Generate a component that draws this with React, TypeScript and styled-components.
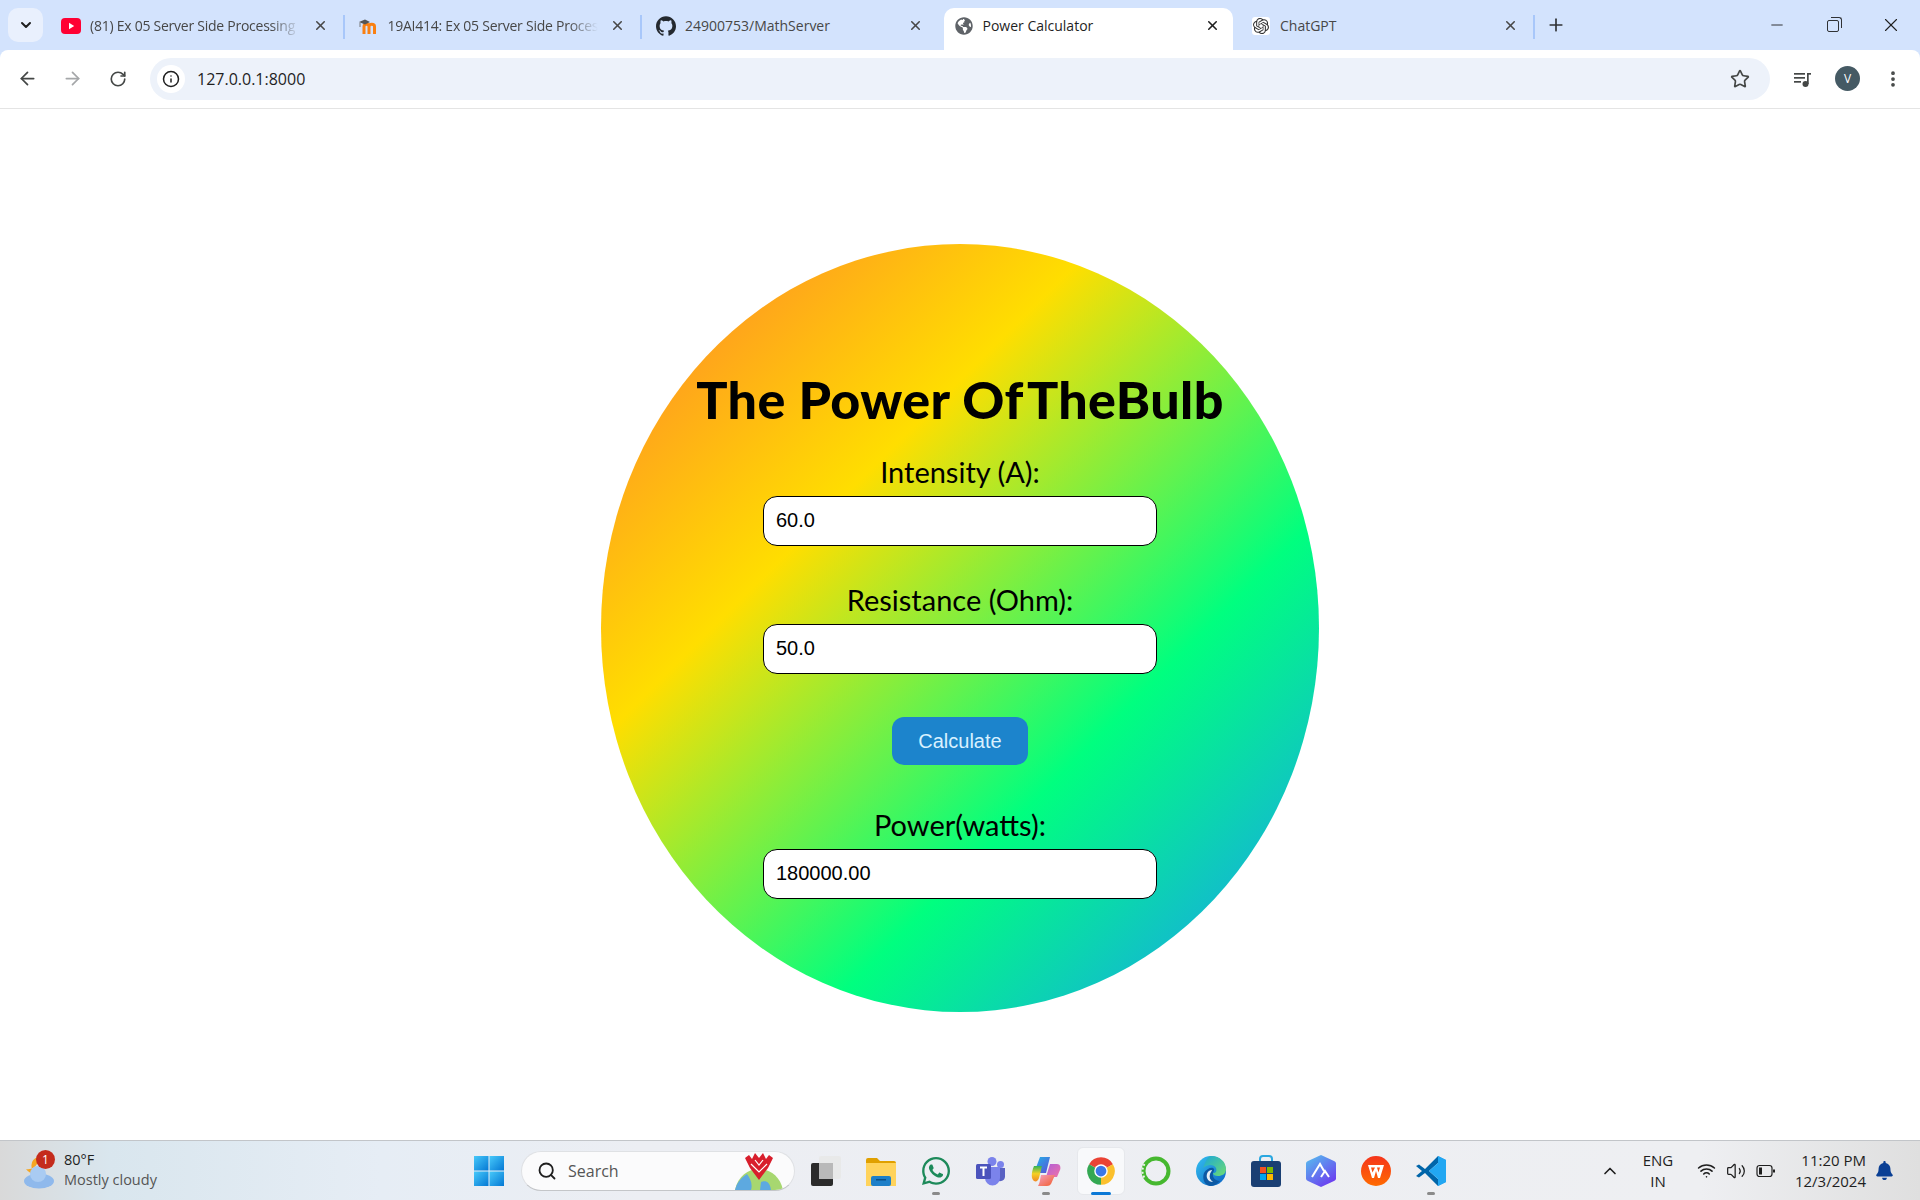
import React from 'react';
import styled, { createGlobalStyle } from 'styled-components';
import { ArrowLeft, ArrowRight, ChevronDown, ChevronUp, Info, Minus, MoreVertical, Plus, RotateCw, Search, Star, Volume2, Wifi, X } from 'lucide-react';
import { FaGlobeAmericas, FaWhatsapp, FaBell } from 'react-icons/fa';
import { SiGithub, SiOpenai } from 'react-icons/si';

const GlobalStyle = createGlobalStyle`
  html, body { margin: 0; padding: 0; background: #fff; }
  #root { height: 100vh; }
  * { box-sizing: border-box; }
`;

const Screen = styled.div`
  height: 1200px;
  width: 1920px;
  display: flex;
  flex-direction: column;
  overflow: hidden;
  font-family: 'Open Sans', 'Liberation Sans', sans-serif;
`;

/* browser chrome */
const TabStrip = styled.div`
  height: 50px;
  background: #d3e3fd;
  display: flex;
  align-items: flex-start;
  flex: none;
`;

const ExpandButton = styled.div`
  width: 35px;
  height: 34px;
  margin: 8px 3px 0 8px;
  border-radius: 10px;
  background: #e9f0fd;
  display: flex;
  align-items: center;
  justify-content: center;
  color: #1f1f1f;
`;

const Tab = styled.div<{ $active?: boolean; $sep?: boolean }>`
  position: relative;
  width: 297.5px;
  height: 42px;
  margin-top: 8px;
  padding: 0 15px 7px 15px;
  display: flex;
  align-items: center;
  color: ${(p) => (p.$active ? '#1f1f1f' : '#474747')};

  ${(p) =>
    p.$active &&
    `
    &::before {
      content: '';
      position: absolute;
      left: 5px;
      right: 3px;
      top: 0;
      bottom: 0;
      background: #fff;
      border-radius: 10px 10px 0 0;
    }
  `}

  ${(p) =>
    p.$sep &&
    `
    &::after {
      content: '';
      position: absolute;
      right: -1px;
      top: 7px;
      width: 2px;
      height: 24px;
      background: #a8c7fa;
    }
  `}
`;

const Favicon = styled.span`
  position: relative;
  width: 20px;
  height: 20px;
  flex: none;
  display: flex;
  align-items: center;
  justify-content: center;
`;

const TabTitle = styled.span<{ $fade?: boolean }>`
  position: relative;
  margin-left: 9px;
  width: 210px;
  flex: none;
  font-size: 14px;
  white-space: nowrap;
  overflow: hidden;
  ${(p) => p.$fade && `letter-spacing: -0.25px; mask-image: linear-gradient(90deg, #000 86%, transparent 100%);`}
`;

const TabClose = styled.span`
  position: relative;
  margin-left: auto;
  margin-right: 1px;
  display: flex;
  align-items: center;
`;

const NewTab = styled.div`
  width: 28px;
  height: 34px;
  margin: 8px 0 0 8.5px;
  display: flex;
  align-items: center;
  justify-content: center;
  color: #303235;
`;

const WindowControls = styled.div`
  margin-left: auto;
  display: flex;
  height: 50px;
  color: #1f1f1f;
`;

const WindowButton = styled.div<{ $w: number }>`
  width: ${(p) => p.$w}px;
  display: flex;
  align-items: center;
  justify-content: center;
`;

const RestoreIcon = styled.span`
  position: relative;
  width: 12px;
  height: 12px;
  border: 1px solid #303235;
  border-radius: 2px;
  background: #d3e3fd;
  margin-top: 2px;

  &::before {
    content: '';
    position: absolute;
    top: -4px;
    right: -4px;
    width: 10px;
    height: 10px;
    border-top: 1px solid #303235;
    border-right: 1px solid #303235;
    border-radius: 0 3px 0 0;
  }
`;

const ToolbarWrap = styled.div`
  background: #d3e3fd;
  flex: none;
`;

const Toolbar = styled.div`
  height: 59px;
  background: #fff;
  border-radius: 8px 8px 0 0;
  border-bottom: 1px solid #e4e4e4;
  padding: 0 4px 1px 5px;
  display: flex;
  align-items: center;
`;

const ToolSlot = styled.div<{ $muted?: boolean }>`
  width: 45px;
  height: 40px;
  flex: none;
  display: flex;
  align-items: center;
  justify-content: center;
  color: ${(p) => (p.$muted ? '#a5a7a9' : '#444746')};
`;

const Omnibox = styled.div`
  width: 1620px;
  height: 42px;
  margin: 0 10px 0 10px;
  padding: 0 20px 0 7px;
  border-radius: 21px;
  background: #edf2fa;
  display: flex;
  align-items: center;
  flex: none;
`;

const InfoChip = styled.span`
  width: 28px;
  height: 28px;
  border-radius: 50%;
  background: #fff;
  display: flex;
  align-items: center;
  justify-content: center;
  color: #1f1f1f;
`;

const Address = styled.span`
  margin-left: 12px;
  font-size: 16px;
  font-family: 'Open Sans', sans-serif;
  color: #1f1f1f;
`;

const StarSlot = styled.span`
  margin-left: auto;
  display: flex;
  color: #444746;
`;

const Avatar = styled.span`
  width: 25px;
  height: 25px;
  border-radius: 50%;
  background: #455a64;
  color: #fff;
  font-size: 12px;
  display: flex;
  align-items: center;
  justify-content: center;
`;

/* the page itself */
const Main = styled.main`
  flex: 1;
  display: flex;
  align-items: center;
  justify-content: center;
  padding-top: 6px;
  background: #fff;
`;

const Bulb = styled.form`
  width: 718px;
  height: 768px;
  border-radius: 50%;
  background: linear-gradient(135deg, #ff7a30, #ffde00, #00ff7f, #1e90ff);
  padding-top: 127px;
  display: flex;
  flex-direction: column;
  align-items: center;
  font-family: Lato, 'Liberation Sans', sans-serif;
  color: #000;
`;

const Title = styled.h1`
  margin: 0 0 25px;
  height: 56px;
  line-height: 56px;
  font-size: 52px;
  font-weight: 900;
  white-space: nowrap;
  letter-spacing: 0.4px;
`;

const Tight = styled.span`
  word-spacing: -7px;
`;

const Field = styled.div<{ $after: number }>`
  display: flex;
  flex-direction: column;
  align-items: center;
  margin-bottom: ${(p) => p.$after}px;
`;

const Label = styled.label`
  height: 40px;
  line-height: 40px;
  margin-bottom: 4px;
  font-size: 29px;
  white-space: nowrap;
`;

const Input = styled.input`
  width: 394px;
  height: 50px;
  padding: 0 12px;
  border: 1px solid #000;
  border-radius: 14px;
  background: #fff;
  color: #000;
  font-family: 'Liberation Sans', Arial, sans-serif;
  font-size: 20px;
  outline: none;
`;

const CalcButton = styled.button`
  width: 136px;
  height: 48px;
  margin-bottom: 40px;
  padding: 2px 0 0;
  border: 0;
  border-radius: 12px;
  background: #1c84cc;
  color: #d8f1ff;
  font-family: 'Liberation Sans', Arial, sans-serif;
  font-size: 20px;
`;

/* taskbar */
const Taskbar = styled.footer`
  height: 60px;
  flex: none;
  border-top: 1px solid #c2c5c9;
  background: linear-gradient(90deg, #d9d9d9 0, #d9e6ee 110px, #e6edf5 380px, #eceef3 640px, #eeeff2 1700px, #dfdfdf 100%);
  display: flex;
  align-items: center;
`;

const Weather = styled.div`
  width: 474px;
  padding-left: 25px;
  display: flex;
  align-items: center;
  flex: none;
`;

const WeatherIcon = styled.div`
  position: relative;
  width: 32px;
  height: 40px;
  margin-right: 10px;
  margin-left: -3px;
`;

const Badge = styled.span`
  position: absolute;
  top: -1px;
  left: 14px;
  width: 19px;
  height: 19px;
  border-radius: 50%;
  background: #c42b1c;
  color: #fff;
  font-size: 12px;
  display: flex;
  align-items: center;
  justify-content: center;
`;

const WeatherText = styled.div`
  font-size: 14.5px;
  line-height: 20px;
  color: #1f1f1f;
  margin-top: -2px;

  small {
    display: block;
    font-size: 14.5px;
    color: #555;
  }
`;

const StartButton = styled.div`
  width: 30px;
  height: 30px;
  flex: none;
`;

const SearchBox = styled.div`
  width: 274px;
  height: 40px;
  margin-left: 17px;
  padding-left: 15px;
  border-radius: 20px;
  background: #fbfbfc;
  border: 1px solid #dfe1e4;
  border-bottom-color: #c4c6c9;
  display: flex;
  align-items: center;
  color: #1f1f1f;
  flex: none;
  overflow: hidden;

  svg.ornament {
    margin-left: auto;
    margin-right: 10px;
  }
`;

const SearchText = styled.span`
  margin-left: 11px;
  font-size: 16px;
  color: #555;
`;

const Apps = styled.div`
  margin-left: 3.5px;
  display: flex;
`;

const AppSlot = styled.div<{ $active?: boolean }>`
  position: relative;
  width: 55px;
  height: 48px;
  display: flex;
  align-items: center;
  justify-content: center;

  ${(p) =>
    p.$active &&
    `
    &::before {
      content: '';
      position: absolute;
      left: 3.5px;
      right: 3.5px;
      top: 0;
      bottom: 0;
      border-radius: 6px;
      background: #f8f9fb;
      border: 1px solid #e6e8ec;
    }
  `}

  > svg {
    position: relative;
  }
`;

const RunDot = styled.span<{ $active?: boolean }>`
  position: absolute;
  bottom: 0;
  left: 50%;
  transform: translateX(-50%);
  width: ${(p) => (p.$active ? 20 : 8)}px;
  height: 3px;
  border-radius: 2px;
  background: ${(p) => (p.$active ? '#0b78d6' : '#8a8a8a')};
`;

const Tray = styled.div`
  margin-left: auto;
  padding-right: 18px;
  display: flex;
  align-items: center;
  color: #1f1f1f;
`;

const TraySlot = styled.div<{ $w: number }>`
  width: ${(p) => p.$w}px;
  display: flex;
  align-items: center;
  justify-content: center;
`;

const Lang = styled.div`
  width: 66px;
  text-align: center;
  font-size: 15px;
  line-height: 21px;
`;

const Clock = styled.div`
  width: 85px;
  text-align: right;
  font-size: 15px;
  line-height: 21px;
  white-space: nowrap;
`;

const YouTubeIcon = () => (
  <svg width="20" height="16" viewBox="0 0 20 16">
    <rect width="20" height="16" rx="4" fill="#ff0033" />
    <path d="M8 4.8 13.2 8 8 11.2z" fill="#fff" />
  </svg>
);

const MoodleIcon = () => (
  <svg width="20" height="18" viewBox="0 0 20 18">
    <path d="M5 17V9.5c0-3 5-3 5 0V17M10 9.5c0-3 5.500-3 5.500 0V17" fill="none" stroke="#f98012" strokeWidth="3" />
    <path d="M0 5 6 2.500 11 5 6 7.500z" fill="#555" />
    <path d="M1 5.500V10" stroke="#777" />
  </svg>
);

const WeatherArt = () => (
  <svg width="32" height="40" viewBox="0 0 32 40">
    <path d="M16 6a9 9 0 0 0-1 17 12 12 0 0 1-11-5 10 10 0 0 0 12-12z" fill="#f5a623" />
    <ellipse cx="17" cy="30" rx="15" ry="7.500" fill="#8fb9ec" />
    <circle cx="16" cy="23" r="8" fill="#a9cbf2" />
  </svg>
);

const WindowsLogo = () => (
  <svg width="30" height="30" viewBox="0 0 30 30">
    <defs>
      <linearGradient id="win" x1="0" y1="0" x2="1" y2="1">
        <stop offset="0" stopColor="#47c9fa" />
        <stop offset="1" stopColor="#0478d4" />
      </linearGradient>
    </defs>
    <rect width="14.500" height="14.500" fill="url(#win)" />
    <rect x="15.500" width="14.500" height="14.500" fill="url(#win)" />
    <rect y="15.500" width="14.500" height="14.500" fill="url(#win)" />
    <rect x="15.500" y="15.500" width="14.500" height="14.500" fill="url(#win)" />
  </svg>
);

const SearchOrnament = () => (
  <svg className="ornament" width="50" height="38" viewBox="0 0 50 38">
    <path d="M1 38C4 24 14 17 25 17s21 7 24 21z" fill="#a7d770" />
    <path d="M1 38C3 30 8 25 13 22c3 4 6 10 4 16zM27 30c4-2 9-1 10 8H26z" fill="#5da9e0" />
    <path d="M11 6l4-3 3 4 3-6 4 5 4-5 3 6 3-4 4 3-5 10-9 12-9-12z" fill="#d81e2c" />
    <path d="M17 12l8 8 8-8M21 8l4 5 4-5" fill="none" stroke="#fff" strokeWidth="1.200" />
  </svg>
);

const TaskViewIcon = () => (
  <svg width="30" height="30" viewBox="0 0 30 30">
    <rect x="0" y="7" width="22" height="23" rx="2" fill="#2b2b2b" />
    <rect x="8" y="0" width="22" height="23" rx="2" fill="#e8e8e8" fillOpacity="0.9" />
    <rect x="8" y="7" width="14" height="16" fill="#b9b9b9" />
  </svg>
);

const FolderIcon = () => (
  <svg width="30" height="30" viewBox="0 0 30 30">
    <path d="M0 4a2 2 0 0 1 2-2h9l3 3h14a2 2 0 0 1 2 2v3H0z" fill="#e0a000" />
    <path d="M0 7h30v23H0z" fill="#ffd35c" />
    <rect x="5" y="20" width="20" height="10" rx="2" fill="#1d7fc8" />
    <rect x="10" y="23" width="10" height="1.500" fill="#0b4f86" />
  </svg>
);

const TeamsIcon = () => (
  <svg width="30" height="30" viewBox="0 0 30 30">
    <circle cx="24.500" cy="8.500" r="3.500" fill="#7b83eb" />
    <circle cx="16" cy="5.500" r="4.500" fill="#7b83eb" />
    <path d="M20 12h9v9a5 5 0 0 1-9 2z" fill="#5a62c3" />
    <path d="M9 11h15v11a7.500 7.500 0 0 1-15 0z" fill="#7b83eb" />
    <rect x="0" y="8" width="15" height="15" rx="1.500" fill="#4b53bc" />
    <path d="M4 11.500h7M7.500 11.500V20" stroke="#fff" strokeWidth="2" />
  </svg>
);

const CopilotIcon = () => (
  <svg width="30" height="30" viewBox="0 0 30 30">
    <defs>
      <linearGradient id="copA" x1="0" y1="0" x2="1" y2="1">
        <stop offset="0" stopColor="#1fb6e8" />
        <stop offset="1" stopColor="#5b4fd6" />
      </linearGradient>
      <linearGradient id="copB" x1="0" y1="0" x2="1" y2="1">
        <stop offset="0" stopColor="#b05fd8" />
        <stop offset="1" stopColor="#f070a8" />
      </linearGradient>
      <linearGradient id="copC" x1="0" y1="0" x2="0" y2="1">
        <stop offset="0" stopColor="#2fb457" />
        <stop offset="0.5" stopColor="#f5d023" />
        <stop offset="1" stopColor="#f08a24" />
      </linearGradient>
      <linearGradient id="copD" x1="0" y1="0" x2="1" y2="1">
        <stop offset="0" stopColor="#f4a0c0" />
        <stop offset="1" stopColor="#f25c2a" />
      </linearGradient>
    </defs>
    <path d="M9 1h10l-4 16H3z" fill="url(#copA)" />
    <path d="M19 8h7c3 0 4 3 3 6l-3 7H15z" fill="url(#copB)" />
    <path d="M3 10h8l-3 12c-1 3-3 4-5 3C0 23 0 17 3 10z" fill="url(#copC)" />
    <path d="M10 19h14l-4 9c-1 1-2 2-4 2H7c2-3 2-7 3-11z" fill="url(#copD)" />
  </svg>
);

const ChromeIcon = () => (
  <svg width="30" height="30" viewBox="0 0 24 24">
    <path d="M2.470 6.500A11 11 0 0 1 21.530 6.500L12 12z" fill="#ea4335" />
    <path d="M21.530 6.500A11 11 0 0 1 12 23L12 12z" fill="#fbc02d" />
    <path d="M12 23A11 11 0 0 1 2.470 6.500L12 12z" fill="#34a853" />
    <circle cx="12" cy="12" r="5.400" fill="#fff" />
    <circle cx="12" cy="12" r="4.300" fill="#3b78e7" />
  </svg>
);

const RingIcon = () => (
  <svg width="30" height="30" viewBox="0 0 30 30">
    <circle cx="15" cy="15" r="12.500" fill="none" stroke="#46b82f" strokeWidth="4" />
    <path d="M3.500 8a13 13 0 0 0 0 14" fill="none" stroke="#eef2ee" strokeWidth="2" strokeDasharray="2 2" />
  </svg>
);

const EdgeIcon = () => (
  <svg width="30" height="30" viewBox="0 0 30 30">
    <defs>
      <linearGradient id="edgeA" x1="0" y1="0" x2="1" y2="1">
        <stop offset="0" stopColor="#35c1f1" />
        <stop offset="1" stopColor="#0b62c4" />
      </linearGradient>
      <linearGradient id="edgeB" x1="0" y1="0" x2="1" y2="1">
        <stop offset="0" stopColor="#1aa7d8" />
        <stop offset="1" stopColor="#6fdc70" />
      </linearGradient>
    </defs>
    <circle cx="15" cy="15" r="15" fill="url(#edgeA)" />
    <path d="M15 0c9 0 15 6 15 13 0 5-4 7-8 7-3 0-5-1-5-3 3 0 4-2 3-5-2-4-9-4-13 0C10 4 12 0 15 0z" fill="url(#edgeB)" />
    <path d="M17 17c-1 4 2 8 7 8-3 3-6 5-10 5-6-1-8-8-6-13 2-4 7-6 9-5 2 1 1 3 0 5z" fill="#0c59a4" />
    <path d="M16 14c-4 0-6 4-5 8 1 3 4 4 6 4-3-2-4-5-3-8 .5-2 2-3 2-4z" fill="#fff" fillOpacity="0.9" />
  </svg>
);

const StoreIcon = () => (
  <svg width="30" height="32" viewBox="0 0 30 32">
    <path d="M9 7V4a3 3 0 0 1 3-3h6a3 3 0 0 1 3 3v3" fill="none" stroke="#2aa7e0" strokeWidth="2" />
    <rect y="6" width="30" height="26" rx="3" fill="#1a3f73" />
    <rect x="9" y="12" width="6" height="6" fill="#f25022" />
    <rect x="16" y="12" width="6" height="6" fill="#7fba00" />
    <rect x="9" y="19" width="6" height="6" fill="#00a4ef" />
    <rect x="16" y="19" width="6" height="6" fill="#ffb900" />
  </svg>
);

const AtlasIcon = () => (
  <svg width="30" height="32" viewBox="0 0 30 32">
    <defs>
      <linearGradient id="atlas" x1="0" y1="0" x2="0.700" y2="1">
        <stop offset="0" stopColor="#55c3ee" />
        <stop offset="1" stopColor="#6c3df0" />
      </linearGradient>
    </defs>
    <path d="M15 0 28 6c2 1 2 2 2 3v14c0 1 0 2-2 3l-13 6-13-6c-2-1-2-2-2-3V9c0-1 0-2 2-3z" fill="url(#atlas)" />
    <path d="M6 22 14 9l4 7M15 22l4-6 4 6" fill="none" stroke="#fff" strokeWidth="2" />
  </svg>
);

const WpsIcon = () => (
  <svg width="30" height="30" viewBox="0 0 30 30">
    <defs>
      <linearGradient id="wps" x1="0" y1="0" x2="0" y2="1">
        <stop offset="0" stopColor="#f5351c" />
        <stop offset="1" stopColor="#ff6a00" />
      </linearGradient>
    </defs>
    <circle cx="15" cy="15" r="15" fill="url(#wps)" />
    <path d="M7 9h16l-4 13h-2l-2-7-2 7h-2zM10 11.500l1.500 5 2.500-5zM16 11.500l1.500 5 1.500-5z" fill="#fff" fillRule="evenodd" />
  </svg>
);

const VsCodeIcon = () => (
  <svg width="30" height="30" viewBox="0 0 30 30">
    <path d="M22 0 30 4v22l-8 4z" fill="#1f9cf0" />
    <path d="M22 0 9 13 3 8.500 0 10l6 5-6 5 3 1.500L9 17l13 13v-7l-9-8 9-8z" fill="#0065a9" />
    <path d="M22 0 30 4v22l-8 4V23L13 15l9-8z" fill="#22a7f2" />
  </svg>
);

const tabs = [
  { title: '(81) Ex 05 Server Side Processing', icon: <YouTubeIcon />, fade: true, sep: true },
  { title: '19AI414: Ex 05 Server Side Processing', icon: <MoodleIcon />, fade: true, sep: true },
  { title: '24900753/MathServer', icon: <SiGithub size={20} color="#24292f" /> },
  { title: 'Power Calculator', icon: <FaGlobeAmericas size={18} color="#5f6368" />, active: true },
  {
    title: 'ChatGPT',
    icon: <SiOpenai size={18} color="#333" style={{ background: '#fff', borderRadius: 3, padding: 1 }} />,
    sep: true,
  },
];

const apps = [
  { key: 'taskview', icon: <TaskViewIcon /> },
  { key: 'files', icon: <FolderIcon /> },
  { key: 'whatsapp', icon: <FaWhatsapp size={32} color="#1d8a5a" />, running: true },
  { key: 'teams', icon: <TeamsIcon /> },
  { key: 'copilot', icon: <CopilotIcon />, running: true },
  { key: 'chrome', icon: <ChromeIcon />, active: true },
  { key: 'ring', icon: <RingIcon /> },
  { key: 'edge', icon: <EdgeIcon /> },
  { key: 'store', icon: <StoreIcon /> },
  { key: 'atlas', icon: <AtlasIcon /> },
  { key: 'wps', icon: <WpsIcon /> },
  { key: 'vscode', icon: <VsCodeIcon />, running: true },
];

const QueueIcon = () => (
  <svg width="20" height="20" viewBox="0 0 20 20" fill="#444746">
    <rect x="1" y="4" width="11" height="1.700" />
    <rect x="1" y="8" width="11" height="1.700" />
    <rect x="1" y="12" width="7" height="1.700" />
    <rect x="14" y="4" width="4" height="1.700" />
    <rect x="14" y="4" width="1.700" height="11" />
    <circle cx="12.500" cy="15" r="3" />
  </svg>
);

const BatteryIcon = () => (
  <svg width="20" height="14" viewBox="0 0 20 14" fill="none" stroke="#1f1f1f" strokeWidth="1.200">
    <rect x="1" y="1.500" width="15" height="11" rx="2.500" />
    <rect x="3" y="3.500" width="3" height="7" fill="#1f1f1f" stroke="none" />
    <path d="M18 5.500v3" strokeWidth="2" />
  </svg>
);

export default function App() {
  return (
    <Screen>
      <GlobalStyle />
      <TabStrip>
        <ExpandButton>
          <ChevronDown size={16} strokeWidth={3} />
        </ExpandButton>
        {tabs.map((tab) => (
          <Tab key={tab.title} $active={tab.active} $sep={tab.sep}>
            <Favicon>{tab.icon}</Favicon>
            <TabTitle $fade={tab.fade}>{tab.title}</TabTitle>
            <TabClose>
              <X size={15} strokeWidth={2.500} />
            </TabClose>
          </Tab>
        ))}
        <NewTab>
          <Plus size={20} strokeWidth={2} />
        </NewTab>
        <WindowControls>
          <WindowButton $w={56}>
            <Minus size={18} strokeWidth={1.200} />
          </WindowButton>
          <WindowButton $w={56}>
            <RestoreIcon />
          </WindowButton>
          <WindowButton $w={59}>
            <X size={22} strokeWidth={1.200} />
          </WindowButton>
        </WindowControls>
      </TabStrip>

      <ToolbarWrap>
        <Toolbar>
          <ToolSlot>
            <ArrowLeft size={21} />
          </ToolSlot>
          <ToolSlot $muted>
            <ArrowRight size={21} />
          </ToolSlot>
          <ToolSlot>
            <RotateCw size={18} strokeWidth={2.200} />
          </ToolSlot>
          <Omnibox>
            <InfoChip>
              <Info size={18} />
            </InfoChip>
            <Address>127.0.0.1:8000</Address>
            <StarSlot>
              <Star size={20} />
            </StarSlot>
          </Omnibox>
          <ToolSlot>
            <QueueIcon />
          </ToolSlot>
          <ToolSlot>
            <Avatar>V</Avatar>
          </ToolSlot>
          <ToolSlot>
            <MoreVertical size={20} strokeWidth={2.500} />
          </ToolSlot>
        </Toolbar>
      </ToolbarWrap>

      <Main>
        <Bulb>
          <Title>
            The Power <Tight>Of TheBulb</Tight>
          </Title>
          <Field $after={34}>
            <Label>Intensity (A):</Label>
            <Input value="60.0" readOnly />
          </Field>
          <Field $after={43}>
            <Label>Resistance (Ohm):</Label>
            <Input value="50.0" readOnly />
          </Field>
          <CalcButton type="button">Calculate</CalcButton>
          <Field $after={0}>
            <Label>Power(watts):</Label>
            <Input value="180000.00" readOnly />
          </Field>
        </Bulb>
      </Main>

      <Taskbar>
        <Weather>
          <WeatherIcon>
            <WeatherArt />
            <Badge>1</Badge>
          </WeatherIcon>
          <WeatherText>
            80°F
            <small>Mostly cloudy</small>
          </WeatherText>
        </Weather>
        <StartButton>
          <WindowsLogo />
        </StartButton>
        <SearchBox>
          <Search size={20} strokeWidth={2.200} />
          <SearchText>Search</SearchText>
          <SearchOrnament />
        </SearchBox>
        <Apps>
          {apps.map((app) => (
            <AppSlot key={app.key} $active={app.active}>
              {app.icon}
              {(app.running || app.active) && <RunDot $active={app.active} />}
            </AppSlot>
          ))}
        </Apps>
        <Tray>
          <TraySlot $w={30}>
            <ChevronUp size={20} strokeWidth={2} />
          </TraySlot>
          <Lang>
            ENG
            <br />
            IN
          </Lang>
          <TraySlot $w={30}>
            <Wifi size={19} />
          </TraySlot>
          <TraySlot $w={30}>
            <Volume2 size={20} strokeWidth={1.500} />
          </TraySlot>
          <TraySlot $w={30}>
            <BatteryIcon />
          </TraySlot>
          <Clock>
            11:20 PM
            <br />
            12/3/2024
          </Clock>
          <TraySlot $w={36}>
            <FaBell size={19} color="#0a3f94" />
          </TraySlot>
        </Tray>
      </Taskbar>
    </Screen>
  );
}
